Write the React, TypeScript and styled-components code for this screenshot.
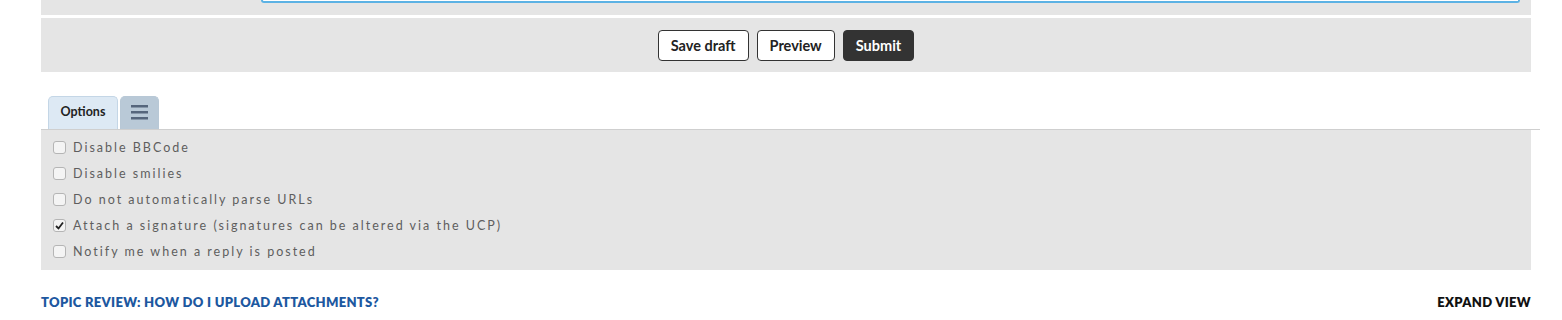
import styled, {createGlobalStyle} from "styled-components";

const GlobalStyle = createGlobalStyle`
  body {
    margin: 0;
    background: #fff;
    font-family: Lato, "Noto Sans", sans-serif;
  }
`;

const Page = styled.div`
  width: 1490px;
  padding-left: 41px;
`;

const Panel = styled.div<{ $height: number }>`
  background: #e5e5e5;
  height: ${p => p.$height}px;
`;

const EditorPanel = styled(Panel)`
  padding-left: 220px;
`;

const TextareaEdge = styled.div`
  width: 1255px;
  height: 1px;
  border: 2px solid #5cb2e4;
  border-top: none;
  border-radius: 0 0 4px 4px;
  background: #fff;
`;

const ButtonBar = styled(Panel)`
  margin-top: 3px;
  display: flex;
  justify-content: center;
  align-items: center;
  gap: 8px;
`;

const Button = styled.button<{ $primary?: boolean }>`
  height: 31px;
  padding: 0 12px;
  border: 1px solid #333;
  border-radius: 4px;
  background: ${p => (p.$primary ? "#333" : "#fff")};
  color: ${p => (p.$primary ? "#fff" : "#222")};
  font-family: Lato, sans-serif;
  font-weight: 700;
  font-size: 14.5px;
`;

const Tabs = styled.div`
  margin-top: 24px;
  display: flex;
  gap: 2px;
  padding-left: 7px;
  width: 1492px;
  border-bottom: 1px solid #cfcfcf;
`;

const Tab = styled.div<{ $active?: boolean }>`
  height: 33px;
  padding-bottom: 3px;
  box-sizing: border-box;
  display: flex;
  align-items: center;
  justify-content: center;
  border-radius: 5px 5px 0 0;
  border: 1px solid ${p => (p.$active ? "#c4d6e6" : "#b8c8d6")};
  border-bottom: none;
  background: ${p => (p.$active ? "#dde9f4" : "#b9c9d7")};
  color: #222;
  font-weight: 700;
  font-size: 12.5px;
  width: ${p => (p.$active ? 70 : 39)}px;
`;

const OptionsPanel = styled.div`
  background: #e5e5e5;
  height: 140px;
  padding: 4px 12px 0;
  box-sizing: border-box;
  display: flex;
  flex-direction: column;
`;

const OptionRow = styled.label`
  height: 26px;
  display: flex;
  align-items: center;
  gap: 7px;
  color: #5e5e5e;
  font-size: 12.5px;
  letter-spacing: 2px;
`;

const Box = styled.span`
  width: 11px;
  height: 11px;
  border: 1px solid #b5b5b5;
  border-radius: 3px;
  background: #f4f4f4;
  display: flex;
  align-items: center;
  justify-content: center;
`;

const Footer = styled.div`
  display: flex;
  justify-content: space-between;
  margin-top: 24px;
  font-weight: 800;
  font-size: 13px;
  letter-spacing: 0.3px;
`;

const ReviewLink = styled.span`
  color: #1d58a0;
`;

const Expand = styled.span`
  color: #111;
`;

const options = [
    {label: "Disable BBCode", checked: false},
    {label: "Disable smilies", checked: false},
    {label: "Do not automatically parse URLs", checked: false},
    {label: "Attach a signature (signatures can be altered via the UCP)", checked: true},
    {label: "Notify me when a reply is posted", checked: false},
];

export default function App() {
    return (
        <Page>
            <GlobalStyle/>
            <EditorPanel $height={15}>
                <TextareaEdge/>
            </EditorPanel>
            <ButtonBar $height={54}>
                <Button>Save draft</Button>
                <Button>Preview</Button>
                <Button $primary>Submit</Button>
            </ButtonBar>
            <Tabs>
                <Tab $active>Options</Tab>
                <Tab>
                    <svg width="17" height="16" viewBox="0 0 17 16">
                        <rect x="0" y="1" width="17" height="2.5" fill="#56667c"/>
                        <rect x="0" y="7" width="17" height="2.5" fill="#56667c"/>
                        <rect x="0" y="13" width="17" height="2.5" fill="#56667c"/>
                    </svg>
                </Tab>
            </Tabs>
            <OptionsPanel>
                {options.map(o => (
                    <OptionRow key={o.label}>
                        <Box>
                            {o.checked && (
                                <svg width="9" height="9" viewBox="0 0 9 9">
                                    <path d="M1 5 L3.5 7.5 L8 1.5" stroke="#222" strokeWidth="1.8" fill="none"/>
                                </svg>
                            )}
                        </Box>
                        {o.label}
                    </OptionRow>
                ))}
            </OptionsPanel>
            <Footer>
                <ReviewLink>TOPIC REVIEW: HOW DO I UPLOAD ATTACHMENTS?</ReviewLink>
                <Expand>EXPAND VIEW</Expand>
            </Footer>
        </Page>
    );
}
